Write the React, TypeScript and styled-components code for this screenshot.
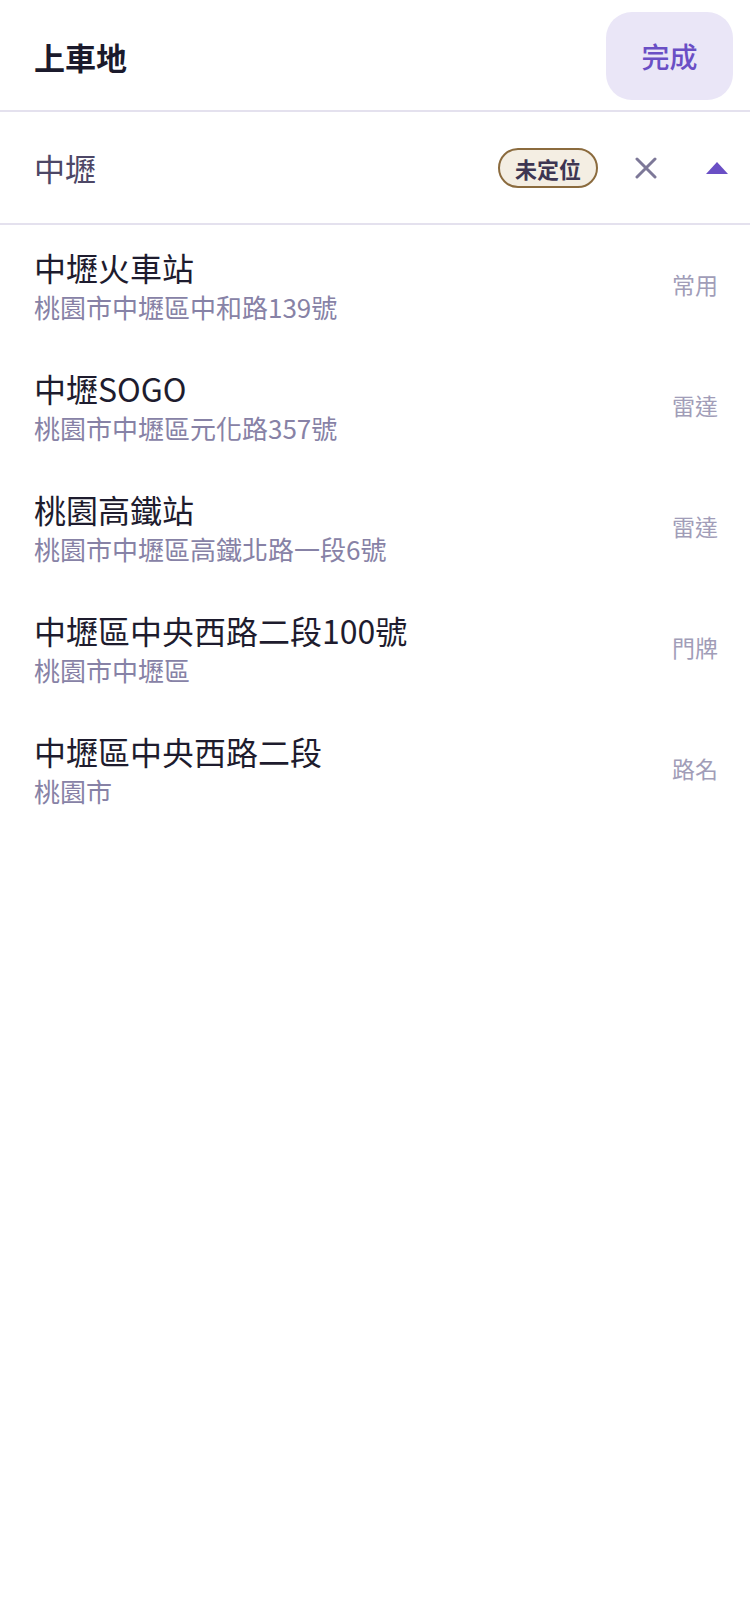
import styled, { createGlobalStyle } from 'styled-components';

type Place = {
  name: string;
  address: string;
  source: string;
};

const places: Place[] = [
  { name: '中壢火車站', address: '桃園市中壢區中和路139號', source: '常用' },
  { name: '中壢SOGO', address: '桃園市中壢區元化路357號', source: '雷達' },
  { name: '桃園高鐵站', address: '桃園市中壢區高鐵北路一段6號', source: '雷達' },
  { name: '中壢區中央西路二段100號', address: '桃園市中壢區', source: '門牌' },
  { name: '中壢區中央西路二段', address: '桃園市', source: '路名' },
];

export default function App() {
  return (
    <>
      <GlobalStyle />
      <Page>
        <Header>
          <Title>上車地</Title>
          <DoneButton>完成</DoneButton>
        </Header>

        <SearchRow>
          <Query>中壢</Query>
          <Status>未定位</Status>
          <IconButton aria-label="clear">
            <svg width="22" height="22" viewBox="0 0 22 22">
              <path d="M2 2 L20 20 M20 2 L2 20" stroke="#7d7898" strokeWidth="3" strokeLinecap="round" />
            </svg>
          </IconButton>
          <IconButton aria-label="collapse">
            <svg width="22" height="12" viewBox="0 0 22 12">
              <polygon points="11,0 22,12 0,12" fill="#6a4fc5" />
            </svg>
          </IconButton>
        </SearchRow>

        <List>
          {places.map((p) => (
            <Row key={p.name}>
              <Texts>
                <Name>{p.name}</Name>
                <Address>{p.address}</Address>
              </Texts>
              <Source>{p.source}</Source>
            </Row>
          ))}
        </List>
      </Page>
    </>
  );
}

const GlobalStyle = createGlobalStyle`
  html, body {
    margin: 0;
    padding: 0;
    background: #ffffff;
  }
  body {
    font-family: "Noto Sans CJK TC", "Noto Sans", sans-serif;
  }
`;

const Page = styled.div`
  width: 750px;
  min-height: 1624px;
  background: #fff;
`;

const Header = styled.div`
  display: flex;
  align-items: center;
  justify-content: space-between;
  padding: 12px 17px 10px 34px;
  border-bottom: 2px solid #e4e1ee;
`;

const Title = styled.div`
  font-size: 31px;
  font-weight: 700;
  color: #1b1a2c;
`;

const DoneButton = styled.button`
  width: 127px;
  height: 88px;
  border: none;
  border-radius: 26px;
  background: #eae6f7;
  color: #6a4fc5;
  font-family: inherit;
  font-size: 28px;
  font-weight: 500;
  cursor: pointer;
`;

const SearchRow = styled.div`
  display: flex;
  align-items: center;
  height: 111px;
  padding: 0 22px 0 34px;
  border-bottom: 2px solid #e4e1ee;
`;

const Query = styled.div`
  flex: 1;
  font-size: 31px;
  color: #4d4766;
`;

const Status = styled.div`
  display: flex;
  align-items: center;
  justify-content: center;
  box-sizing: border-box;
  width: 100px;
  height: 40px;
  border: 2px solid #8b6b3e;
  border-radius: 20px;
  background: #f4eee3;
  color: #3d3552;
  font-size: 22px;
  font-weight: 700;
`;

const IconButton = styled.div`
  display: flex;
  align-items: center;
  justify-content: center;
  margin-left: 37px;
  &:last-child {
    margin-left: 49px;
  }
`;

const List = styled.div`
  display: flex;
  flex-direction: column;
`;

const Row = styled.div`
  display: flex;
  align-items: center;
  padding: 22px 32px 19px 34px;
`;

const Texts = styled.div`
  flex: 1;
  display: flex;
  flex-direction: column;
`;

const Name = styled.div`
  font-size: 32px;
  line-height: 40px;
  color: #1e1c2e;
`;

const Address = styled.div`
  font-size: 26px;
  line-height: 40px;
  color: #8782a6;
`;

const Source = styled.div`
  font-size: 23px;
  color: #a19db8;
  margin-bottom: 6px;
`;
